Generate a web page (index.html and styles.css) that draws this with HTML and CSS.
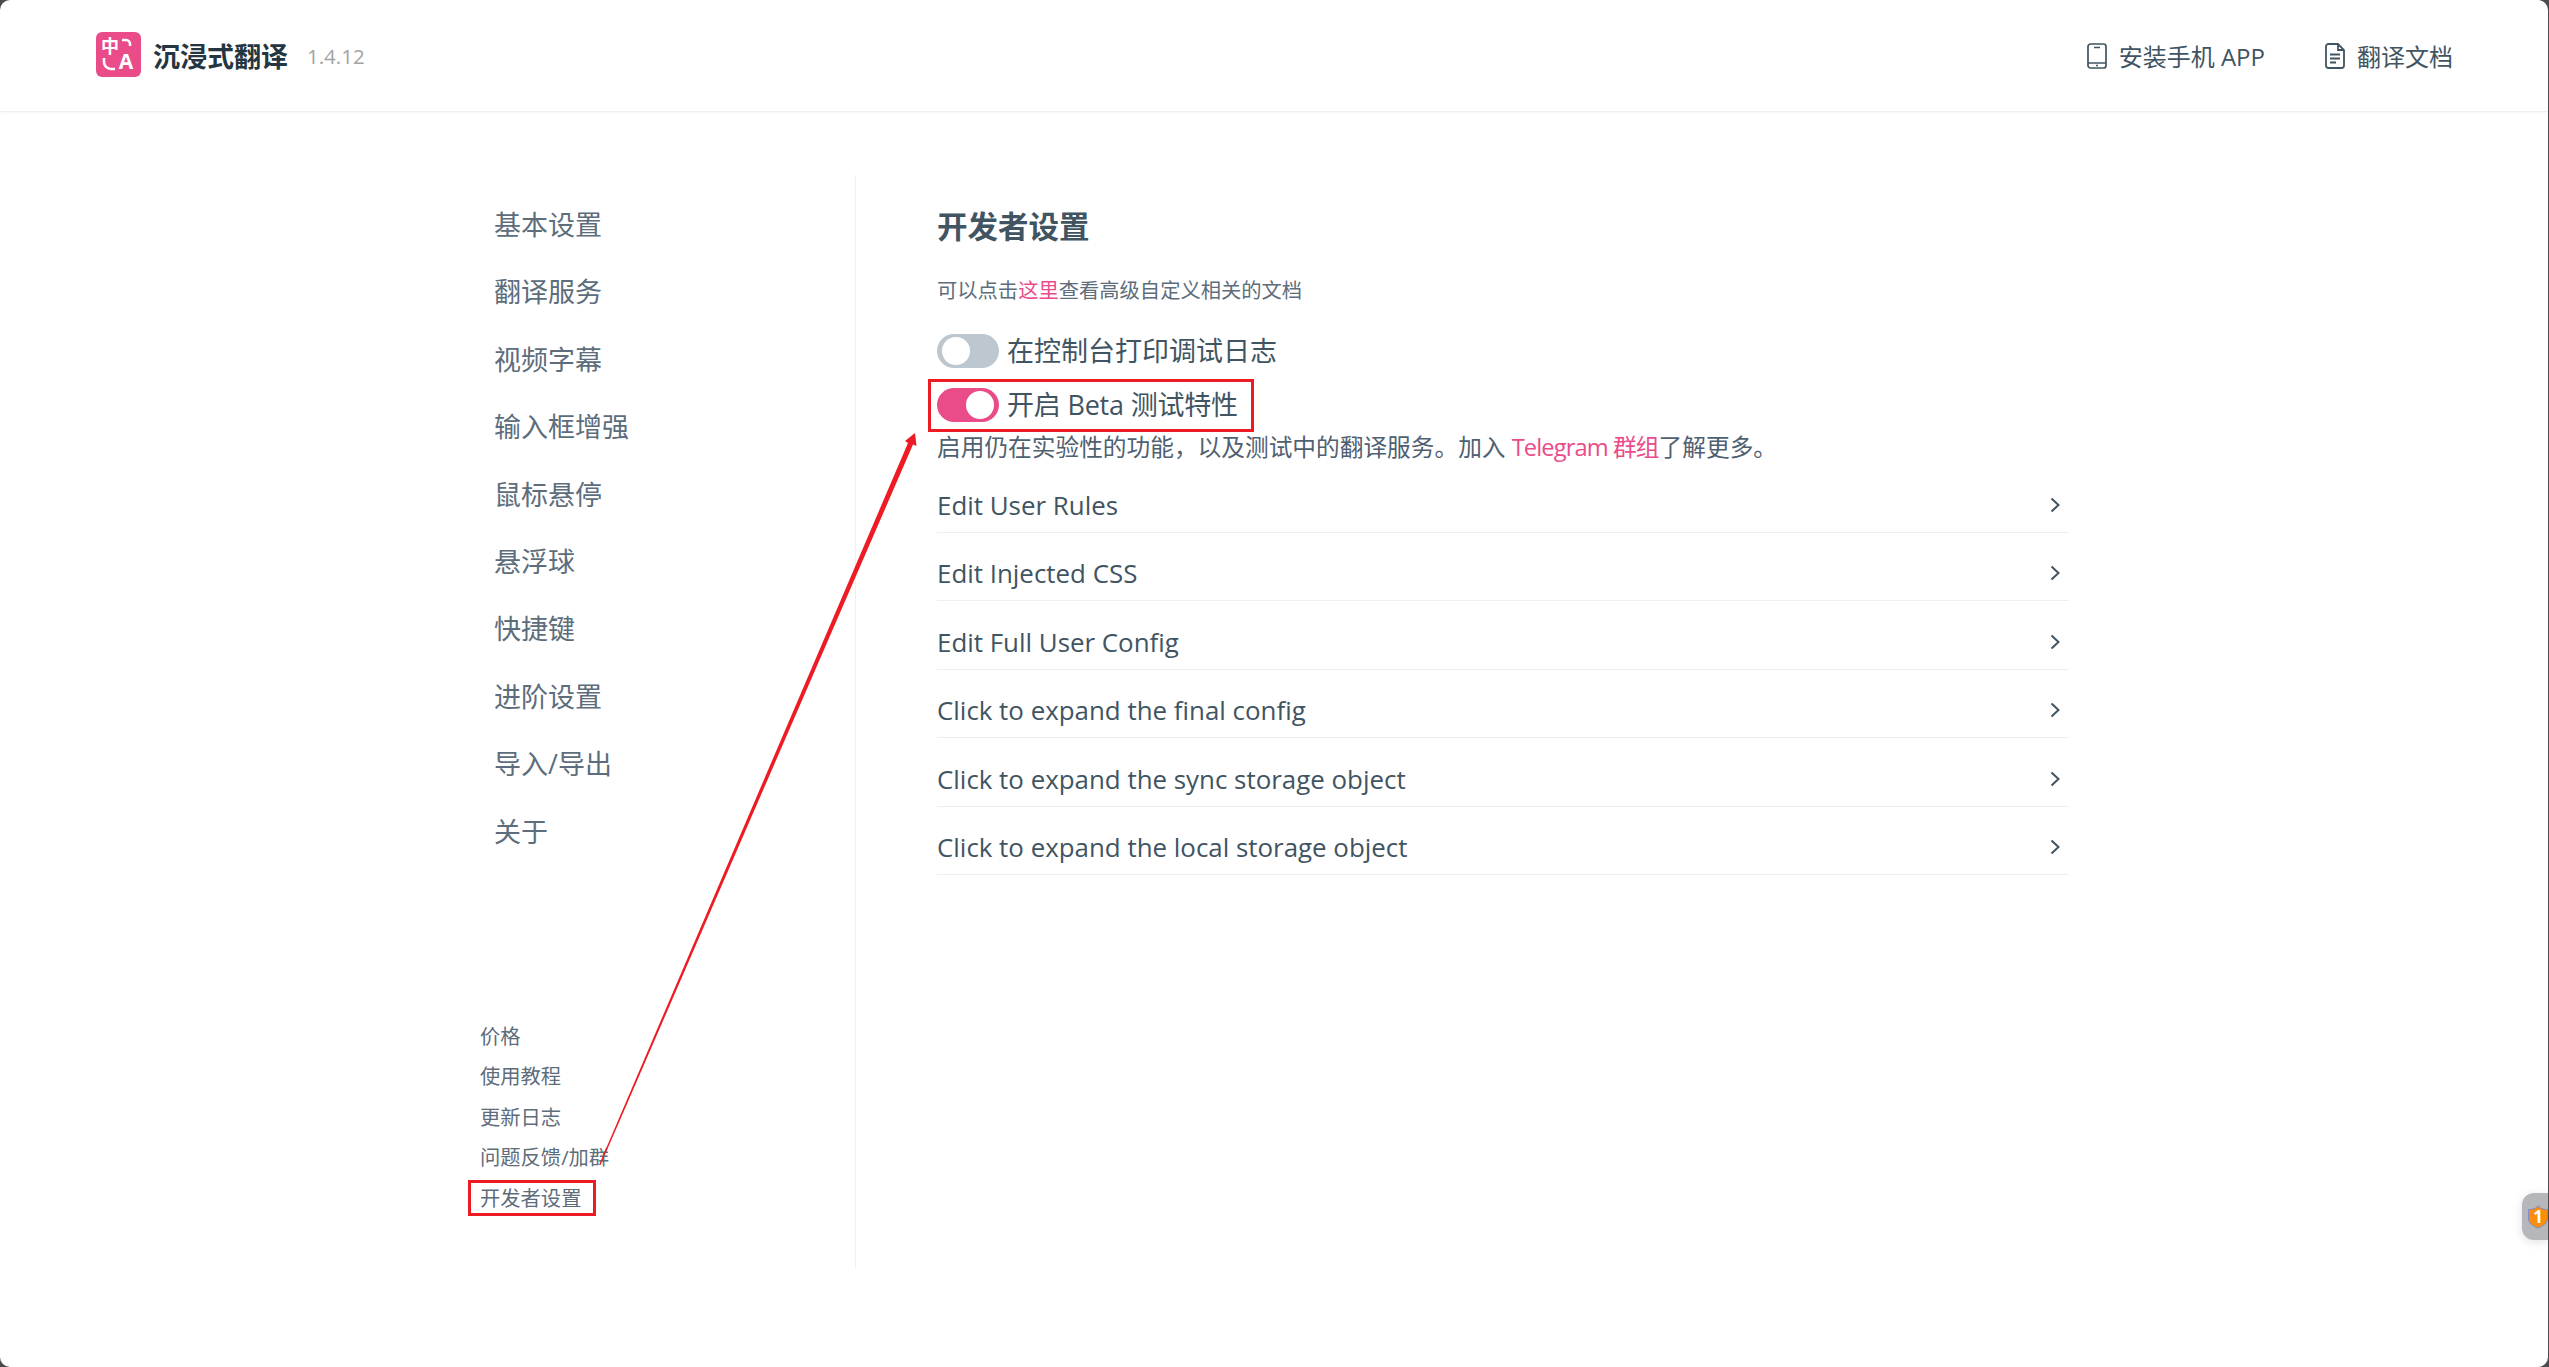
FILE: index.html
```html
<!DOCTYPE html>
<html lang="zh-CN">
<head>
<meta charset="UTF-8" />
<meta name="viewport" content="width=device-width, initial-scale=1" />
<title>沉浸式翻译</title>
<link rel="stylesheet" href="styles.css">
</head>
<body>

<header class="topbar">
  <div class="brand">
    <svg class="logo" viewBox="0 0 45 45">
      <rect width="45" height="45" rx="6" fill="#ea4c89" />
      <text class="logo-zh" x="14" y="21" text-anchor="middle">中</text>
      <text class="logo-en" x="30" y="37" text-anchor="middle">A</text>
      <path d="M26 8h4a4 4 0 0 1 4 4v2M8 26v4a7 7 0 0 0 7 7h4" fill="none" stroke="#fff" stroke-width="2.6" />
    </svg>
    <span class="brand-name">沉浸式翻译</span>
    <span class="version">1.4.12</span>
  </div>
  <nav class="toplinks">
    <a>
      <svg class="top-icon" viewBox="0 0 20 26"><rect x="1" y="1" width="18" height="24" rx="2.5" fill="none" stroke="#415462" stroke-width="1.7" /><path d="M7 4.500h6M1 20h18" stroke="#415462" stroke-width="1.7" /><circle cx="10" cy="22.500" r="1" fill="#415462" /></svg>
      安装手机 APP
    </a>
    <a>
      <svg class="top-icon" viewBox="0 0 20 26"><path d="M3.500 1H13l6 6v15.500a2.500 2.500 0 0 1-2.500 2.500h-13A2.500 2.500 0 0 1 1 22.500v-19A2.500 2.500 0 0 1 3.500 1zM13 1v6h6M5 11.500h10M5 15.500h10M5 19.500h6" fill="none" stroke="#415462" stroke-width="1.8" /></svg>
      翻译文档
    </a>
  </nav>
</header>

<div class="layout">
  <aside class="sidebar">
    <ul class="menu">
      <li>基本设置</li>
      <li>翻译服务</li>
      <li>视频字幕</li>
      <li>输入框增强</li>
      <li>鼠标悬停</li>
      <li>悬浮球</li>
      <li>快捷键</li>
      <li>进阶设置</li>
      <li>导入/导出</li>
      <li>关于</li>
    </ul>
    <ul class="sublinks">
      <li>价格</li>
      <li>使用教程</li>
      <li>更新日志</li>
      <li>问题反馈/加群</li>
      <li><span class="marked-link">开发者设置</span></li>
    </ul>
  </aside>

  <main class="content">
    <h1>开发者设置</h1>
    <p class="hint">可以点击<a>这里</a>查看高级自定义相关的文档</p>

    <div class="switch-row">
      <span class="switch"></span>
      <span class="switch-label">在控制台打印调试日志</span>
    </div>
    <div class="switch-row">
      <div class="marked-switch">
        <span class="switch on"></span>
        <span class="switch-label beta">开启 Beta 测试特性</span>
      </div>
    </div>
    <p class="desc">启用仍在实验性的功能，以及测试中的翻译服务。加入 <a>Telegram 群组</a>了解更多。</p>

    <div class="row">Edit User Rules<svg class="chevron" viewBox="0 0 10 16"><path d="M1.500 1.500L8.500 8l-7 6.500" /></svg></div>
    <div class="row">Edit Injected CSS<svg class="chevron" viewBox="0 0 10 16"><path d="M1.500 1.500L8.500 8l-7 6.500" /></svg></div>
    <div class="row">Edit Full User Config<svg class="chevron" viewBox="0 0 10 16"><path d="M1.500 1.500L8.500 8l-7 6.500" /></svg></div>
    <div class="row">Click to expand the final config<svg class="chevron" viewBox="0 0 10 16"><path d="M1.500 1.500L8.500 8l-7 6.500" /></svg></div>
    <div class="row">Click to expand the sync storage object<svg class="chevron" viewBox="0 0 10 16"><path d="M1.500 1.500L8.500 8l-7 6.500" /></svg></div>
    <div class="row">Click to expand the local storage object<svg class="chevron" viewBox="0 0 10 16"><path d="M1.500 1.500L8.500 8l-7 6.500" /></svg></div>
  </main>
</div>

<svg class="arrow" viewBox="0 0 2549 1367">
  <path d="M915 433L916.500 446L913 444.500L600.500 1165L599 1165L908 443L905 441Z" fill="#ed1c24" />
</svg>

<div class="float-ball">
  <svg class="shield" viewBox="0 0 20 24">
    <path d="M10 .8L13 3.500C15 4 17.500 4.500 19.500 4.500V14C19.500 18 15 21 10 23.200C5 21 .5 18 .5 14V4.500C2.500 4.500 5 4 7 3.500Z" fill="#fb8c0c" stroke="#7d8fd0" />
    <text x="10" y="18" text-anchor="middle">1</text>
  </svg>
</div>

</body>
</html>
```

FILE: styles.css
```css
* {
  box-sizing: border-box;
}
html {
  background: #4b4b4d;
}
body {
  position: relative;
  margin: 0 1px 0 0;
  height: 1367px;
  overflow: hidden;
  background: #fff;
  border-radius: 10px;
  color: #415462;
  font-family: "Open Sans", "Noto Sans CJK SC", sans-serif;
}
a {
  color: inherit;
}
ul {
  list-style: none;
  margin: 0;
  padding: 0;
}

.topbar {
  display: flex;
  align-items: center;
  justify-content: space-between;
  height: 112px;
  padding: 0 95px 0 96px;
  border-bottom: 1px solid #eeeeee;
  box-shadow: 0 1px 3px rgba(0, 0, 0, 0.04);
}
.brand {
  display: flex;
  align-items: center;
}
.logo {
  width: 45px;
  height: 45px;
  margin-top: -2px;
}
.logo text {
  fill: #fff;
  font-weight: 700;
}
.logo-zh {
  font-size: 18px;
}
.logo-en {
  font-size: 21px;
}
.brand-name {
  margin-left: 12px;
  font-size: 27px;
  font-weight: 700;
  color: #253642;
}
.version {
  margin-left: 19px;
  font-size: 20.500px;
  color: #a3a3a3;
}
.toplinks {
  display: flex;
  gap: 60px;
  font-size: 24px;
}
.toplinks a {
  display: flex;
  align-items: center;
  gap: 12px;
}
.top-icon {
  width: 20px;
  height: 26px;
}

.layout {
  display: flex;
  margin: 63px 0 0 480px;
}
.sidebar {
  display: flex;
  flex-direction: column;
  justify-content: space-between;
  width: 376px;
  height: 1093px;
  padding: 16px 0 50px;
  border-right: 1px solid #f0f0f0;
  color: #5d6d7b;
}
.menu {
  padding-left: 14px;
  font-size: 27px;
}
.menu li {
  height: 67.400px;
  line-height: 67.400px;
}
.sublinks {
  font-size: 20.300px;
}
.sublinks li {
  height: 40.500px;
  line-height: 40.500px;
}
.marked-link {
  display: inline-block;
  height: 36px;
  margin-left: -12px;
  padding: 0 12px 0 9px;
  line-height: 30px;
  border: 3px solid #ed1c24;
}

.content {
  width: 1213px;
  padding: 31px 0 0 81px;
}
h1 {
  margin: 0;
  font-size: 30.500px;
  line-height: 40px;
  font-weight: 700;
}
.hint {
  margin: 29px 0 19px;
  font-size: 20.300px;
  line-height: 30px;
  color: #5d6d7b;
}
.hint a,
.desc a {
  color: #ea4c89;
}
.switch-row {
  display: flex;
  align-items: center;
  gap: 8px;
  height: 54px;
  font-size: 27px;
}
.switch-label {
  padding-bottom: 3px;
}
.beta {
  letter-spacing: -0.2px;
}
.marked-switch {
  display: flex;
  align-items: center;
  gap: 8px;
  height: 53px;
  margin-left: -9px;
  padding: 0 13px 0 6px;
  border: 3px solid #ed1c24;
}
.switch {
  position: relative;
  width: 62px;
  height: 34px;
  border-radius: 17px;
  background: #bcc7d0;
}
.switch::before {
  content: "";
  position: absolute;
  top: 3px;
  left: 5px;
  width: 28px;
  height: 28px;
  border-radius: 50%;
  background: #fff;
}
.switch.on {
  background: #ea4c89;
}
.switch.on::before {
  left: 29px;
}
.desc {
  margin: 0 0 2px;
  font-size: 23.700px;
  line-height: 30px;
  color: #4f6070;
}
.desc a {
  letter-spacing: -0.9px;
}
.row {
  display: flex;
  align-items: center;
  justify-content: space-between;
  height: 68.500px;
  padding: 14px 9px 0 0;
  border-bottom: 1px solid #eeeeee;
  font-size: 25.900px;
}
.chevron {
  width: 10px;
  height: 16px;
  fill: none;
  stroke: #415462;
  stroke-width: 2;
}

.arrow {
  position: absolute;
  top: 0;
  left: 0;
  width: 2549px;
  height: 1367px;
  pointer-events: none;
}
.float-ball {
  position: absolute;
  top: 1193px;
  right: 0;
  width: 26px;
  height: 47px;
  padding: 12px 0 0 6px;
  border-radius: 12px 0 0 12px;
  background: #b6b7bb;
  box-shadow: 0 2px 10px rgba(0, 0, 0, 0.12);
}
.shield {
  display: block;
  width: 20px;
  height: 24px;
}
.shield text {
  fill: #fff;
  font-size: 17px;
  font-weight: 700;
}
```
